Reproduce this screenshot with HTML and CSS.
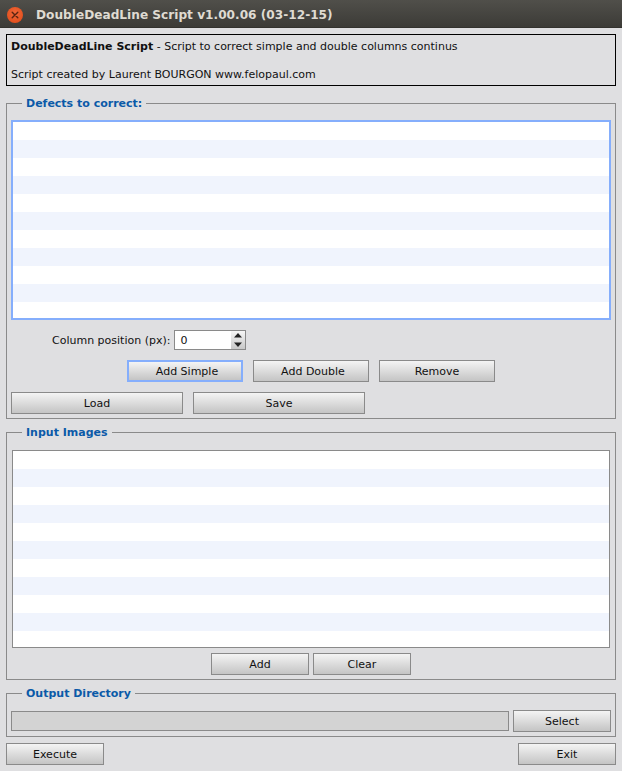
FILE: index.html
```html
<!DOCTYPE html>
<html lang="en">
<head>
<meta charset="utf-8">
<title>DoubleDeadLine Script</title>
<link rel="stylesheet" href="styles.css">
</head>
<body>
<header class="titlebar">
  <span class="close"><svg width="16" height="16" viewBox="0 0 16 16"><path d="M5.2 5.2l5.6 5.6M10.8 5.2l-5.6 5.6" stroke="#5a2410" stroke-width="1.4" stroke-linecap="round" fill="none"/></svg></span>
  <span class="title">DoubleDeadLine Script v1.00.06 (03-12-15)</span>
</header>
<main class="window">
  <section class="info">
    <p><b>DoubleDeadLine Script</b> - Script to correct simple and double columns continus</p>
    <p>Script created by Laurent BOURGON www.felopaul.com</p>
  </section>

  <fieldset class="group">
    <legend>Defects to correct:</legend>
    <div class="list focused">
      <div></div><div></div><div></div><div></div><div></div><div></div><div></div><div></div><div></div><div></div><div></div>
    </div>
    <div class="row spin-row">
      <label class="spin-label">Column position (px):</label>
      <div class="spin">
        <span class="spin-value">0</span>
        <span class="spin-arrows">
          <span class="spin-arrow"><svg width="10" height="9" viewBox="0 0 10 9"><path d="M5 2L9 6.5H1Z" fill="#222"/></svg></span>
          <span class="spin-arrow"><svg width="10" height="9" viewBox="0 0 10 9"><path d="M5 7L9 2.5H1Z" fill="#222"/></svg></span>
        </span>
      </div>
    </div>
    <div class="row add-row">
      <button class="btn w116 focus">Add Simple</button>
      <button class="btn w116 nudge">Add Double</button>
      <button class="btn w116">Remove</button>
    </div>
    <div class="row load-row">
      <button class="btn w172">Load</button>
      <button class="btn w172">Save</button>
    </div>
  </fieldset>

  <fieldset class="group">
    <legend>Input Images</legend>
    <div class="list plain">
      <div></div><div></div><div></div><div></div><div></div><div></div><div></div><div></div><div></div><div></div><div></div>
    </div>
    <div class="row image-row">
      <button class="btn w98">Add</button>
      <button class="btn w98">Clear</button>
    </div>
  </fieldset>

  <fieldset class="group">
    <legend>Output Directory</legend>
    <div class="output-row">
      <div class="path"></div>
      <button class="btn w98">Select</button>
    </div>
  </fieldset>

  <div class="actions">
    <button class="btn w98">Execute</button>
    <button class="btn w98">Exit</button>
  </div>
</main>
</body>
</html>
```
FILE: styles.css
```css
* { box-sizing: border-box; }
html, body { margin: 0; height: 100%; }
body {
  background: #dfdfe1;
  color: #111;
  font: 11px/14px "DejaVu Sans", sans-serif;
  overflow: hidden;
}
.titlebar {
  height: 28px;
  display: flex;
  align-items: center;
  background: linear-gradient(#504f4a, #3c3b37);
  border-bottom: 1px solid #33322e;
  padding: 2px 0 0 7px;
}
.close {
  width: 16px;
  height: 16px;
  border-radius: 50%;
  background: radial-gradient(circle at 50% 40%, #f2683a, #dd4814);
  display: flex;
}
.title {
  margin-left: 13px;
  color: #dfdbd2;
  font: bold 12.15px/16px "DejaVu Sans", sans-serif;
}
.window { padding: 6px 6px 0; }
.info {
  height: 52px;
  border: 1px solid #000;
  padding: 5px 4px 0;
}
.info p { margin: 0 0 14px; }
.group {
  margin: 6px 0 0;
  padding: 10px 4px 4px;
  min-width: 0;
  border: 1px solid #8a8a8a;
}
.info + .group { margin-top: 10px; }
.group legend {
  margin-left: 11px;
  padding: 2px 4px 0;
  height: 14px;
  color: #0b5aa8;
  font-weight: bold;
  line-height: 12px;
}
.list {
  display: flex;
  flex-direction: column;
  overflow: hidden;
  background: #fff;
}
.list > div { flex: 0 0 18px; }
.list > div:nth-child(even) { background: #f0f4fd; }
.list.focused {
  height: 200px;
  border: 2px solid #85aefc;
}
.list.plain {
  height: 198px;
  margin: 1px 1px 0;
  border: 1px solid #8a8a8a;
}
.row { display: flex; }
.spin-row {
  margin-top: 10px;
  height: 20px;
  align-items: center;
  gap: 4px;
  padding-left: 41px;
}
.spin-label { padding-top: 2px; }
.spin {
  width: 72px;
  height: 20px;
  display: flex;
  justify-content: space-between;
  border: 1px solid #8a8a8a;
  background: #fff;
}
.spin-value { padding: 3px 0 0 5px; }
.spin-arrows {
  width: 14px;
  display: flex;
  flex-direction: column;
  background: linear-gradient(#f6f6f6, #c8c8c8);
}
.spin-arrow { flex: 1; display: flex; align-items: center; justify-content: center; }
.add-row { margin-top: 10px; padding-left: 116px; gap: 10px; }
.load-row { margin-top: 10px; gap: 10px; }
.image-row { margin-top: 5px; justify-content: center; gap: 4px; }
.btn {
  height: 22px;
  padding: 2px 0 0;
  border: 1px solid #8a8a8a;
  border-radius: 0;
  background: linear-gradient(#f4f4f4, #c4c4c4);
  color: #111;
  font: 11px/14px "DejaVu Sans", sans-serif;
}
.btn.focus { border: 2px solid #85aefc; padding-left: 4px; }
.btn.nudge { padding-left: 4px; }
.w98 { width: 98px; }
.w116 { width: 116px; }
.w172 { width: 172px; }
.output-row { display: flex; align-items: center; gap: 4px; }
.path {
  flex: 1;
  height: 20px;
  background: #d3d3d3;
  border: 1px solid #8a8a8a;
}
.actions {
  margin-top: 6px;
  display: flex;
  justify-content: space-between;
}
```
